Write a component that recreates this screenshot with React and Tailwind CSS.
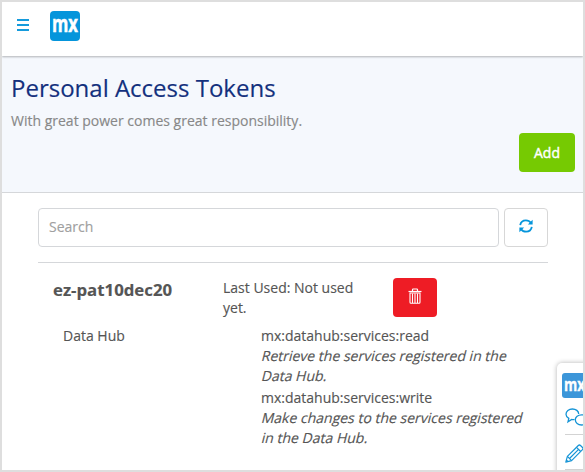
function MenuIcon() {
  return (
    <svg className="h-3 w-3" viewBox="0 0 12 12" fill="#159bdc">
      <path d="M0 0h12v2H0zM0 5h12v2H0zM0 10h12v2H0z" />
    </svg>
  );
}

function RefreshIcon() {
  return (
    <svg className="size-[14px]" viewBox="0 0 14 14" fill="none" stroke="#0595db" strokeWidth="1.800">
      <path d="M1.200 6.100C1.700 3.300 4 1.300 6.900 1.300c2.100 0 3.900.9 5 2.500" />
      <path d="M12.800 7.900c-.5 2.800-2.800 4.800-5.700 4.800-2.100 0-3.900-.9-5-2.500" />
      <path d="M13.600.8v4.700H8.900z" fill="#0595db" stroke="none" />
      <path d="M.4 13.200V8.500h4.700z" fill="#0595db" stroke="none" />
    </svg>
  );
}

function TrashIcon() {
  return (
    <svg className="h-4 w-[14px]" viewBox="0 0 14 16" fill="none" stroke="#fff">
      <path d="M.5 3.500h13" strokeWidth="1.200" />
      <path d="M4.500 3V1.700q0-.7.7-.7h3.600q.7 0 .7.7V3" strokeWidth="1.200" />
      <path d="M2 5h10v9.300q0 1-1 1H3q-1 0-1-1z" strokeWidth="1.100" />
      <path d="M4.500 5.500V15M7 5.500V15M9.500 5.500V15" strokeWidth="1.100" />
    </svg>
  );
}

function ChatIcon() {
  return (
    <svg className="h-5 w-6 shrink-0" viewBox="0 0 24 20" fill="none" stroke="#1594d6" strokeWidth="1.300">
      <path d="M9.500 11.300c-1 .3-1.700.3-2.800.2L3 13.800l.8-3.400C2 9.300 1 8 1 6.300 1 3.400 3.800 1 7.400 1c3.400 0 6.300 2 6.300 5" />
      <path d="M16.500 6.800c-3.500 0-6.200 2.100-6.200 5s2.700 5.200 6.200 5.200c.8 0 1.500-.1 2.200-.3l3.600 2-.7-3.300c1-.9 1.600-2.100 1.600-3.600 0-2.900-3-5-6.700-5z" fill="#fff" />
    </svg>
  );
}

function PencilIcon() {
  return (
    <svg className="size-[19px] shrink-0" viewBox="0 0 19 19" fill="none" stroke="#1594d6" strokeWidth="1.200" strokeLinejoin="round">
      <path d="M.8 18.200l1.600-5.800L13.300 1.500q1.100-1 2.200 0l2 2q1.100 1.100 0 2.200L6.600 16.600z" />
      <path d="M11.500 3.300l4.200 4.200M2.400 12.400l4.200 4.200M4.500 14.500L13.600 5.400M1.400 16l1.600 1.600" />
    </svg>
  );
}

/* Oblique description lines: each one is slanted on its own so they share a left edge. */
function Scope({ name, lines }) {
  return (
    <div className="mb-[2px] leading-5">
      <div>{name}</div>
      {lines.map((line) => (
        <div key={line} className="ml-[1px] w-max -skew-x-[14deg]">{line}</div>
      ))}
    </div>
  );
}

export default function App() {
  return (
    <div className="relative flex h-[472px] w-[585px] flex-col overflow-hidden border-2 border-[#dedede] bg-white font-['Open_Sans','Noto_Sans',sans-serif] text-sm text-[#555] [-webkit-text-stroke:0.15px]">
      <header className="z-10 flex h-[54px] shrink-0 items-start bg-white pl-[15px] pt-[9px] shadow-[0_1px_2px_rgba(0,0,0,0.28)]">
        <button className="mt-[8px] h-3" aria-label="Menu">
          <MenuIcon />
        </button>
        <div className="ml-[21px] size-[30px] rounded-[4px] bg-[#0595db]">
          <svg className="size-[30px]" viewBox="0 0 30 30">
            <text x="2" y="21.300" textLength="26" lengthAdjust="spacingAndGlyphs" fill="#fff" stroke="#fff" strokeWidth="0.500" fontFamily="Open Sans" fontSize="22.500" fontWeight="700">mx</text>
          </svg>
        </div>
      </header>

      <section className="flex h-[137px] shrink-0 flex-col border-b border-[#d5d7da] bg-[#f5f8fd] pl-[9px] pr-2 pt-[15px]">
        <h1 className="text-[24px] leading-[34px] text-[#13307d]">Personal Access Tokens</h1>
        <p className="mt-[6px] leading-5 text-[#888]">With great power comes great responsibility.</p>
        <button className="mt-[2px] h-[39px] w-14 self-end rounded-[4px] bg-[#76ca02] text-white [-webkit-text-stroke:0.4px]">Add</button>
      </section>

      <main className="ml-9 mt-[15px] w-[510px]">
        <div className="flex gap-[5px]">
          <input className="h-[39px] w-[461px] rounded-[4px] border border-[#d5d7da] px-[10px] pb-[2px] placeholder:text-[#a0a0a0]" placeholder="Search" />
          <button className="flex h-[39px] w-11 items-center justify-center rounded-[4px] border border-[#d7d7d7] pb-[4px]" aria-label="Refresh">
            <RefreshIcon />
          </button>
        </div>
        <div className="mt-[15px] border-t border-[#d5d7da] pl-[15px] pt-[15px]">
          <div className="flex h-12">
            <h2 className="w-[170px] text-[16.8px] font-bold leading-6">ez-pat10dec20</h2>
            <p className="w-[170px] pr-[30px] leading-5">Last Used: Not used yet.</p>
            <button className="flex h-[39px] w-11 items-center justify-center rounded-[4px] bg-[#ee1c25] pb-[4px]" aria-label="Delete">
              <TrashIcon />
            </button>
          </div>
          <div className="flex pl-[10px]">
            <div className="w-[198px] leading-5">Data Hub</div>
            <div className="w-[270px]">
              <Scope name="mx:datahub:services:read" lines={["Retrieve the services registered in the", "Data Hub."]} />
              <Scope name="mx:datahub:services:write" lines={["Make changes to the services registered", "in the Data Hub."]} />
            </div>
          </div>
        </div>
      </main>

      <aside className="absolute left-[555px] top-[361px] flex h-[130px] w-9 flex-col rounded-[5px] bg-white pl-[5px] pt-[10px] shadow-[0_0_5px_rgba(0,0,0,0.3)]">
        <svg className="h-[25px] w-[30px] shrink-0" viewBox="0 0 30 25">
          <rect width="30" height="25" rx="3" fill="#3c96d9" />
          <text x="2" y="17.500" textLength="21" lengthAdjust="spacingAndGlyphs" fill="#fff" stroke="#fff" strokeWidth="0.400" fontFamily="Open Sans" fontSize="18.500" fontWeight="700">mx</text>
        </svg>
        <div className="ml-[3px] h-[37px] border-b border-[#d3d3d3] pt-[10px]">
          <ChatIcon />
        </div>
        <div className="ml-[3px] h-[35px] border-b border-[#d3d3d3] pt-[9px]">
          <PencilIcon />
        </div>
      </aside>
    </div>
  );
}
